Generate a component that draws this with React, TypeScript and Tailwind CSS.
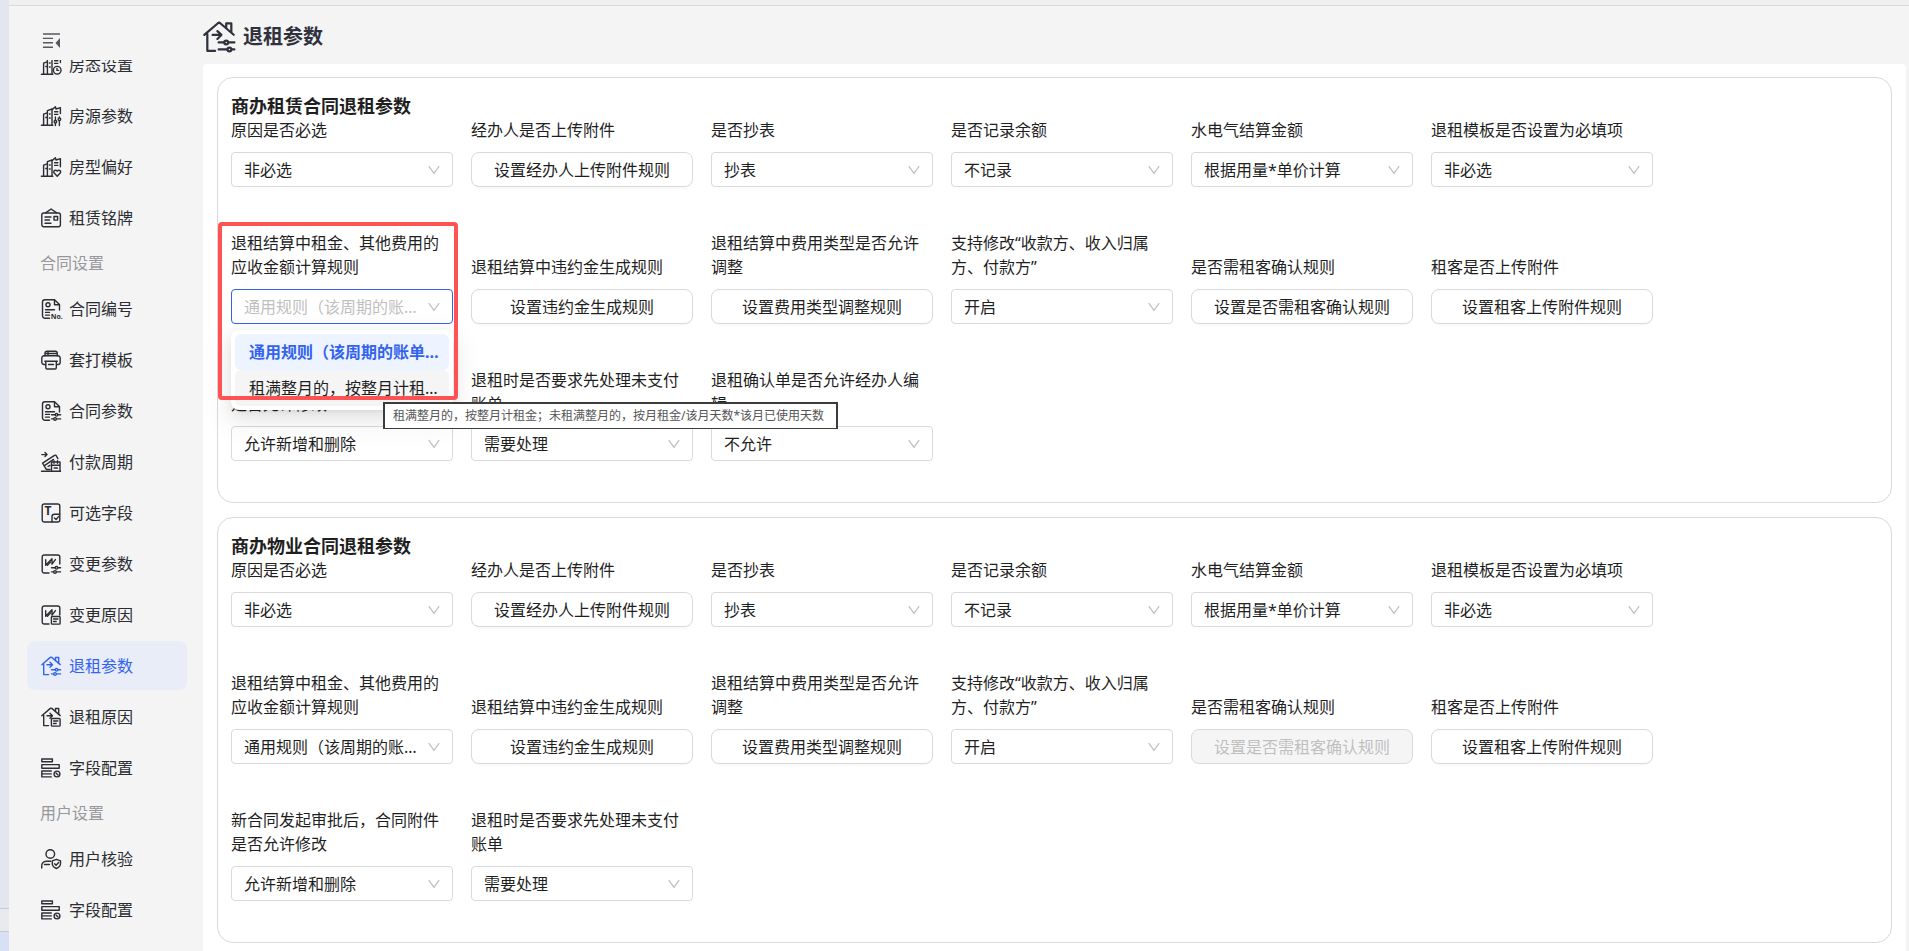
import { useLayoutEffect, useRef, type ReactNode } from 'react'
import clsx from 'clsx'

// ── Icons ──

interface IconProps {
  className?: string
}

function Svg({ className = 'size-5', children }: IconProps & { children: ReactNode }) {
  return (
    <svg
      viewBox="0 0 20 20"
      className={clsx('shrink-0 overflow-visible', className)}
      fill="none"
      stroke="currentColor"
      strokeWidth={1.4}
      strokeLinecap="round"
      strokeLinejoin="round"
      aria-hidden="true"
    >
      {children}
    </svg>
  )
}

const Towers = () => (
  <>
    <path d="M.4 19.3h11.4" />
    <path d="M2.6 19V8.2l3.6-1.3M4.8 11.5h1" />
    <path d="M6.4 19V4.6L11 3v16M8.4 8h.8M8.4 12h.8" />
    <path d="M11.4 3.4l3-2.6.6 2.2 4.4-1.4v6" />
    <path d="M13.6 5.8h3.2M13.6 8.4h3.2" />
  </>
)

const HouseStatusIcon = () => (
  <Svg>
    <Towers />
    <circle cx="16.2" cy="15.2" r="3.8" />
    <path d="M16 13.4v2h1.6" />
  </Svg>
)

const HouseParamIcon = () => (
  <Svg>
    <Towers />
    <path d="M14.4 11v3.4M14.4 17.2v2.3M18.4 11v.8M18.4 14.8v4.7" />
    <circle cx="14.4" cy="15.8" r="1.3" />
    <circle cx="18.4" cy="13.2" r="1.3" />
  </Svg>
)

const HouseLikeIcon = () => (
  <Svg>
    <Towers />
    <path d="M19.4 7.5v2.3" />
    <path d="M16.2 19.2l-3-3.1c-1.5-1.8.9-4.2 3-2 2.1-2.2 4.5.2 3 2z" />
  </Svg>
)

const PlateIcon = () => (
  <Svg>
    <rect x=".8" y="5" width="18.6" height="13.8" rx="2" />
    <path d="M4.6 4.8L10.1 1l5.500 3.800" />
    <path d="M4 9h6M4 12h4.5M4 15.3h6" />
    <rect x="13" y="8.500" width="3.600" height="3.600" />
  </Svg>
)

const DocBody = () => (
  <>
    <path d="M8.500 19.300H4a2.500 2.500 0 0 1-2.500-2.500V3.300A2.500 2.500 0 0 1 4 .8h9.500l5 4.700v5.500" />
    <path d="M13.500 1v4.700h4.800" />
    <circle cx="7" cy="5.800" r="2" />
    <path d="M4.500 10.700h9M4.500 13.400h4M4.500 16.100h4" />
  </>
)

const DocNoIcon = () => (
  <Svg>
    <DocBody />
    <text x="9.800" y="19.600" fontSize="7" fontWeight="bold" fill="currentColor" stroke="none">
      No.
    </text>
  </Svg>
)

const Sliders = () => (
  <>
    <path d="M10.500 13.800h3.500M17 13.800h2.600M10.500 17.900h2M15.600 17.900h4" />
    <circle cx="15.500" cy="13.800" r="1.300" />
    <circle cx="14" cy="17.900" r="1.300" />
  </>
)

const HeaderSliders = () => (
  <>
    <path d="M9.800 13.400h3.400M16 13.400h3.600M9.800 17.800h5.400M18 17.800h1.600" />
    <circle cx="14.500" cy="13.400" r="1.200" />
    <circle cx="16.500" cy="17.800" r="1.200" />
  </>
)

const DocParamIcon = () => (
  <Svg>
    <DocBody />
    <Sliders />
  </Svg>
)

const PrinterIcon = () => (
  <Svg>
    <path d="M4 5.800V3a1.800 1.800 0 0 1 1.800-1.800h8.600A1.800 1.800 0 0 1 16.200 3v2.800M7 1.400v4M4 3.500h12" />
    <path d="M4.500 14.500H3a2.200 2.200 0 0 1-2.200-2.200V8A2.200 2.200 0 0 1 3 5.800h14A2.200 2.200 0 0 1 19.200 8v4.300a2.200 2.200 0 0 1-2.200 2.200h-1.400" />
    <path d="M3.800 11.300h12.600M4.800 11.500v6.200a1.300 1.300 0 0 0 1.300 1.300h7.900a1.300 1.300 0 0 0 1.300-1.300v-6.200M7.500 14.500h5" />
  </Svg>
)

const PayCycleIcon = () => (
  <Svg>
    <path d="M.8 2.600h5M4 .6l2 2-2 2M.5 19.300h19" />
    <path d="M9 17.500H6.200a1.600 1.600 0 0 1-1.400-.9L1.600 11.200 13.500 3.300a1.300 1.300 0 0 1 1.800.5l1.600 2.800" />
    <path d="M3.800 13.300L12.500 7.400M7 14.500l2-1.200" />
    <path d="M10.500 19v-9h8.500v9M10.500 13.200h8.500M13 8.700v2.500M16.500 8.700v2.500M13.200 16h3.200" />
  </Svg>
)

const OptionalFieldIcon = () => (
  <Svg>
    <rect x="1.200" y="1" width="17.600" height="18" rx="2" />
    <text x="3.600" y="12.400" fontSize="12" fontWeight="bold" fill="currentColor" stroke="none">
      T
    </text>
    <path d="M11 18.800v-5.300c0-1.500 1-2.300 2.400-2.300h5.200M13.400 15l1.700 1.600 2.400-3" />
  </Svg>
)

const ChangeFrame = () => (
  <>
    <path d="M8 19H3.200a2 2 0 0 1-2-2V3a2 2 0 0 1 2-2h13.600a2 2 0 0 1 2 2v7" />
    <path d="M4.700 5.800v5.400L11 4.800v5.400l3.400-4.600" />
    <path d="M6.400 11.200L9.600 8" />
  </>
)

const ChangeParamIcon = () => (
  <Svg>
    <ChangeFrame />
    <Sliders />
  </Svg>
)

const Note = () => (
  <>
    <rect x="10.400" y="11.500" width="8.700" height="7.600" rx=".8" />
    <path d="M12.600 14h4.300M12.600 16.500h2.600" />
  </>
)

const ChangeReasonIcon = () => (
  <Svg>
    <ChangeFrame />
    <Note />
  </Svg>
)

const HouseOut = () => (
  <>
    <path d="M7.600 18.600H2.700V8.200M.8 8.700l8.500-7.300a1.200 1.200 0 0 1 1.500 0l8.400 7.200" />
    <path d="M14.500 4V1.500h3.200v5.200" />
    <path d="M6 8.700h5M9 6.300l2.500 2.400L9 11.200" />
  </>
)

const MoveOutParamIcon = () => (
  <Svg>
    <HouseOut />
    <Sliders />
  </Svg>
)

const MoveOutReasonIcon = () => (
  <Svg>
    <HouseOut />
    <Note />
  </Svg>
)

const FieldConfigIcon = () => (
  <Svg>
    <rect x=".8" y="1" width="10.600" height="2.800" />
    <rect x=".8" y="6.600" width="17.400" height="3.600" />
    <path d="M.8 13h9.500M.8 15.900h9.500M.8 18.900h9.500M.8 13v5.900" />
    <circle cx="16" cy="16" r="2.900" />
    <path d="M15 15l2 2" />
  </Svg>
)

const UserCheckIcon = () => (
  <Svg>
    <circle cx="9.300" cy="5" r="4.300" />
    <path d="M.7 19v-2.300a4.500 4.500 0 0 1 4.500-4.500h4.600M3.500 15.500h5" />
    <path d="M15.400 10.300l4.100 1.500v3c0 2.200-1.800 3.700-4.100 4.700-2.300-1-4.100-2.500-4.100-4.700v-3z" />
    <path d="M13.600 14.700l1.500 1.500 2.500-2.700" />
  </Svg>
)

const CollapseIcon = () => (
  <svg viewBox="0 0 18 16" className="h-4 w-[18px]" fill="none" stroke="currentColor" strokeWidth={1.400} aria-hidden="true">
    <path d="M0 1h17M0 5.400h10M0 9.800h10M0 14.200h10" />
    <path d="M17 5v10l-4.500-5z" fill="currentColor" stroke="none" />
  </svg>
)

const ChevronIcon = () => (
  <svg
    viewBox="0 0 12 12"
    className="pointer-events-none absolute top-1/2 right-[13px] size-3 -translate-y-1/2 text-[#bfbfbf]"
    fill="none"
    stroke="currentColor"
    strokeWidth={1.200}
    aria-hidden="true"
  >
    <path d="M.8 2.200L6 9.400l5.200-7.200" />
  </svg>
)

// ── Sidebar ──

interface NavEntry {
  text: string
  icon?: ReactNode
  active?: boolean
}

// entries without an icon are group titles
const NAV: NavEntry[] = [
  { text: '房态设置', icon: <HouseStatusIcon /> },
  { text: '房源参数', icon: <HouseParamIcon /> },
  { text: '房型偏好', icon: <HouseLikeIcon /> },
  { text: '租赁铭牌', icon: <PlateIcon /> },
  { text: '合同设置' },
  { text: '合同编号', icon: <DocNoIcon /> },
  { text: '套打模板', icon: <PrinterIcon /> },
  { text: '合同参数', icon: <DocParamIcon /> },
  { text: '付款周期', icon: <PayCycleIcon /> },
  { text: '可选字段', icon: <OptionalFieldIcon /> },
  { text: '变更参数', icon: <ChangeParamIcon /> },
  { text: '变更原因', icon: <ChangeReasonIcon /> },
  { text: '退租参数', icon: <MoveOutParamIcon />, active: true },
  { text: '退租原因', icon: <MoveOutReasonIcon /> },
  { text: '字段配置', icon: <FieldConfigIcon /> },
  { text: '用户设置' },
  { text: '用户核验', icon: <UserCheckIcon /> },
  { text: '字段配置', icon: <FieldConfigIcon /> },
]

function Sidebar() {
  const navRef = useRef<HTMLElement>(null)

  useLayoutEffect(() => {
    if (navRef.current) navRef.current.scrollTop = 20
  }, [])

  return (
    <aside className="flex w-[194px] shrink-0 flex-col">
      <div className="flex h-[54px] shrink-0 items-end pb-[11px] pl-[34px]">
        <button type="button" aria-label="menu" className="text-[#55575c]">
          <CollapseIcon />
        </button>
      </div>
      <nav
        ref={navRef}
        className="flex min-h-0 flex-1 flex-col gap-0.5 overflow-y-auto pr-4 pb-8 pl-[18px] [scrollbar-width:none]"
      >
        {NAV.map((entry, i) =>
          entry.icon ? (
            <a
              key={i}
              href="#"
              className={clsx(
                'flex h-[49px] shrink-0 items-center gap-2 rounded-lg px-3.5',
                entry.active ? 'bg-[#e9edf7] text-[#3363ee]' : 'text-[#2b2d33]'
              )}
            >
              {entry.icon}
              {entry.text}
            </a>
          ) : (
            <h3 key={i} className="flex h-[38px] shrink-0 items-center px-[13px] text-[#96989c]">
              {entry.text}
            </h3>
          )
        )}
      </nav>
    </aside>
  )
}

// ── Form ──

interface Field {
  label: string
  value: string
  kind?: 'select' | 'button'
  disabled?: boolean
  open?: boolean
}

const COMMON_RULE = '通用规则（该周期的账单金额/该周期天数*该周期已使用天数）'
const MONTH_RULE = '租满整月的，按整月计租金；未租满整月的，按月租金/该月天数*该月已使用天数'

const buildFields = (open: boolean): Field[] => [
  { label: '原因是否必选', value: '非必选' },
  { label: '经办人是否上传附件', value: '设置经办人上传附件规则', kind: 'button' },
  { label: '是否抄表', value: '抄表' },
  { label: '是否记录余额', value: '不记录' },
  { label: '水电气结算金额', value: '根据用量*单价计算' },
  { label: '退租模板是否设置为必填项', value: '非必选' },
  { label: '退租结算中租金、其他费用的应收金额计算规则', value: COMMON_RULE, open },
  { label: '退租结算中违约金生成规则', value: '设置违约金生成规则', kind: 'button' },
  { label: '退租结算中费用类型是否允许调整', value: '设置费用类型调整规则', kind: 'button' },
  { label: '支持修改“收款方、收入归属方、付款方”', value: '开启' },
  { label: '是否需租客确认规则', value: '设置是否需租客确认规则', kind: 'button', disabled: !open },
  { label: '租客是否上传附件', value: '设置租客上传附件规则', kind: 'button' },
  { label: '新合同发起审批后，合同附件是否允许修改', value: '允许新增和删除' },
  { label: '退租时是否要求先处理未支付账单', value: '需要处理' },
]

const LEASE_FIELDS: Field[] = [
  ...buildFields(true),
  { label: '退租确认单是否允许经办人编辑', value: '不允许' },
]
const PROPERTY_FIELDS = buildFields(false)

function RuleDropdown() {
  return (
    <>
      <ul
        role="listbox"
        className="absolute top-full left-0 z-10 mt-1.5 w-full rounded-lg bg-white p-1 shadow-[0_6px_16px_0_rgba(0,0,0,0.08),0_3px_6px_-4px_rgba(0,0,0,0.12),0_9px_28px_8px_rgba(0,0,0,0.05)]"
      >
        <li role="option" aria-selected="true" className="truncate rounded-md bg-[#edf4ff] pr-2 pl-3.5 leading-9 font-bold text-[#3363ee]">
          {COMMON_RULE}
        </li>
        <li role="option" aria-selected="false" className="truncate rounded-md bg-[#f5f5f5] pr-2 pl-3.5 leading-9">
          {MONTH_RULE}
        </li>
      </ul>
      <div
        role="tooltip"
        className="absolute top-[113px] left-[152px] z-30 border-x-2 border-t-2 border-b border-[#3c3c3c] bg-white pr-3 pl-2 text-xs leading-6 whitespace-nowrap text-[#555]"
      >
        {MONTH_RULE}
      </div>
    </>
  )
}

function FormField({ id, field }: { id: string; field: Field }) {
  return (
    <div className="relative flex w-[222px] flex-col gap-2.5">
      <label htmlFor={id} className="leading-6">
        {field.label}
      </label>
      {field.kind === 'button' ? (
        <button
          id={id}
          type="button"
          disabled={field.disabled}
          className="h-[35px] rounded-lg border border-[#d9d9d9] bg-white shadow-[0_2px_0_rgba(0,0,0,0.02)] disabled:bg-[#f5f5f5] disabled:text-[#bfbfbf] disabled:shadow-none"
        >
          {field.value}
        </button>
      ) : (
        <div className="relative">
          <select
            id={id}
            className={clsx(
              'block h-[35px] w-full appearance-none truncate rounded-[4px] border bg-white pr-7 pl-3',
              field.open ? 'border-[#3363ee] text-[#bfbfbf]' : 'border-[#d9d9d9]'
            )}
          >
            <option>{field.value}</option>
          </select>
          <ChevronIcon />
          {field.open && <RuleDropdown />}
        </div>
      )}
      {field.open && (
        <div className="pointer-events-none absolute -top-[9px] -left-[13px] z-20 h-[178px] w-60 rounded-sm border-4 border-[#ff5252]" />
      )}
    </div>
  )
}

function ParamCard({ id, title, fields }: { id: string; title: string; fields: Field[] }) {
  return (
    <section className="rounded-2xl border border-[#d9d9d9] px-[13px] pt-4 pb-[41px]">
      <h2 className="text-lg leading-6 font-bold">{title}</h2>
      <div className="flex flex-wrap items-end gap-x-[18px] gap-y-11">
        {fields.map((field, i) => (
          <FormField key={field.label} id={`${id}-${i}`} field={field} />
        ))}
      </div>
    </section>
  )
}

export default function App() {
  return (
    <div className="flex h-screen overflow-hidden bg-[#f4f4f4] font-['Noto_Sans','Noto_Sans_CJK_SC',sans-serif] text-base text-[#1f1f1f]">
      {/* window edge on the left */}
      <div className="flex w-[9px] shrink-0 flex-col bg-[#e1e6ef]">
        <div className="flex-1" />
        <div className="h-6 border-y border-[#c6cbd3] bg-[#e8ebee]" />
        <div className="h-[19px] bg-[#d7e0f4]" />
      </div>
      <div className="flex min-w-0 flex-1 flex-col">
        <div className="h-1.5 shrink-0 border-b border-[#dadada] bg-[#f0f0f0]" />
        <div className="flex min-h-0 flex-1">
          <Sidebar />
          <main className="flex min-w-0 flex-1 flex-col pr-[3px]">
            <header className="flex h-[58px] shrink-0 items-center gap-2 pt-1 text-[#2f323c]">
              <Svg className="size-8">
                <HouseOut />
                <HeaderSliders />
              </Svg>
              <h1 className="text-xl font-bold">退租参数</h1>
            </header>
            <div className="flex min-h-0 flex-1 flex-col gap-3.5 overflow-y-auto rounded-t bg-white px-3.5 pt-[13px] pb-2 [scrollbar-width:none]">
              <ParamCard id="lease" title="商办租赁合同退租参数" fields={LEASE_FIELDS} />
              <ParamCard id="property" title="商办物业合同退租参数" fields={PROPERTY_FIELDS} />
            </div>
          </main>
        </div>
      </div>
    </div>
  )
}
